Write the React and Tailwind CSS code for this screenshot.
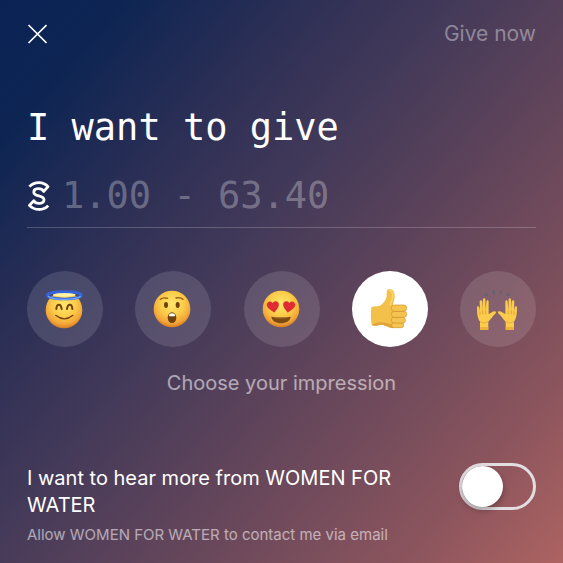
import { useState } from "react";

const CloseIcon = () => (
    <svg
        className="size-5"
        viewBox="0 0 20 20"
        fill="none"
        stroke="currentColor"
        strokeWidth="1.6"
        aria-hidden="true"
    >
        <path d="M1.5 1 19.5 19M19.5 1 1.5 19" />
    </svg>
);

const CoinIcon = () => (
    <svg
        className="h-[30px] w-[23px] shrink-0"
        viewBox="-1 0 23 30"
        fill="none"
        stroke="currentColor"
        strokeWidth="2.8"
        strokeLinejoin="round"
        aria-hidden="true"
    >
        <path d="M1.4 5.6C6.5 0.2 15.5 0.2 20 5.6L15.8 10.4C13.4 6.6 5.8 6.8 5.8 11.2C5.8 16.2 16 13.6 16 18.8C16 23.2 8 23.6 5.8 19.8L1.4 24.4C6.5 29.8 15.5 29.8 20.2 24.6" />
    </svg>
);

const Face = ({ cy = 60 }) => (
    <>
        <defs>
            <radialGradient id="face" cx="50%" cy="36%" r="66%">
                <stop offset="0" stopColor="#ffe76c" />
                <stop offset="0.5" stopColor="#fbcb48" />
                <stop offset="0.8" stopColor="#f2a538" />
                <stop offset="1" stopColor="#cf7420" />
            </radialGradient>
        </defs>
        <circle cx="57" cy={cy} r="55" fill="url(#face)" />
    </>
);

const Innocent = () => (
    <>
        <Face cy={63} />
        <ellipse cx="58" cy="17" rx="34" ry="6" fill="#fff3a8" />
        <ellipse cx="58" cy="19" rx="51" ry="11" fill="none" stroke="#3565dc" strokeWidth="8" />
        <path d="M9 22C22 34 94 34 107 22" fill="none" stroke="#71a5fa" strokeWidth="4" />
        <g fill="none" stroke="#70410f" strokeWidth="6" strokeLinecap="round">
            <path d="M34 60C35 43 48 43 50 60M66 60C68 43 81 43 82 60" />
            <path d="M32 79Q58 100 84 79" strokeWidth="4" />
        </g>
    </>
);

const Astonished = () => (
    <>
        <Face />
        <g fill="none" stroke="#91581a" strokeWidth="4" strokeLinecap="round">
            <path d="M22 31Q31 24 44 28M69 27Q81 23 90 31" />
        </g>
        <g fill="#70410f">
            <ellipse cx="39" cy="48" rx="6" ry="9" />
            <ellipse cx="74" cy="48" rx="6" ry="9" />
            <ellipse cx="57" cy="86" rx="13" ry="16" />
        </g>
        <path d="M48 77Q57 69 66 77L66 82H48Z" fill="#fff" />
    </>
);

const HeartEyes = () => (
    <>
        <Face />
        <g fill="#e02b35" stroke="#bd1e29" strokeWidth="1">
            <path d="M37 70C26 62 15 57 15 47C15 37 28 35 32 43C36 34 51 36 50 47C50 56 42 62 37 70Z" />
            <path d="M77 70C72 62 64 56 64 47C63 36 78 34 82 43C86 35 99 37 99 47C99 57 88 62 77 70Z" />
        </g>
        <path d="M28 83Q57 88 86 83C84 109 30 109 28 83Z" fill="#7c4b14" />
        <path d="M29 83Q57 88 85 83Q57 94 29 83Z" fill="#a46f25" />
    </>
);

const ThumbsUp = () => (
    <>
        <path
            d="M5 108C2 92 2 70 4 55C12 50 22 53 30 50C40 44 48 34 50 22C49 10 50 2 56 0C68-2 75 8 74 22C74 32 70 42 68 51L90 68L68 118C56 116 44 107 34 107C24 108 15 113 5 108Z"
            fill="#f3c04a"
        />
        <path d="M5 108C15 113 24 108 34 107C44 107 56 116 68 118L72 108C50 104 32 92 5 108Z" fill="#e2a338" />
        <g fill="#f5c44e" stroke="#cf922c" strokeWidth="2">
            <rect x="65" y="101" width="36" height="15" rx="7" />
            <rect x="64" y="85" width="42" height="17" rx="8" />
            <rect x="64" y="67" width="46" height="18" rx="9" />
            <rect x="64" y="48" width="46" height="19" rx="9" />
        </g>
        <path d="M56 4Q66 2 69 18Q67 36 60 48" fill="none" stroke="#fad56a" strokeWidth="5" />
    </>
);

const Hand = () => (
    <>
        <path
            d="M6 122V98C-1 88-3 76-3 56C-3 50 3 50 4 56L6 67L5 38C5 32 12 32 13 38L14 63L15 32C15 26 22 26 22 32L23 64L25 38C25 32 32 32 32 38V75C38 74 42 67 51 67C56 68 55 72 50 76C42 84 38 92 31 98V122Z"
            fill="#fbcb4c"
        />
        <path d="M6 67V78M14 63V76M23 64V76" stroke="#d99628" strokeWidth="2" />
        <path d="M6 114H31V122H6Z" fill="#efb13c" />
        <path d="M6 98Q18 106 31 98" fill="none" stroke="#dfa033" strokeWidth="2" />
    </>
);

const RaisedHands = () => (
    <>
        <g fill="#65616e">
            <path d="M16 21L27 9L31 21Z" />
            <path d="M42 6L51 4L51 19L46 15Z" />
            <path d="M65 4L74 7L70 15L65 18Z" />
            <path d="M89 9L99 21L84 20Z" />
        </g>
        <Hand />
        <g transform="matrix(-1 0 0 1 114 0)">
            <Hand />
        </g>
    </>
);

const impressions = [
    { id: "innocent", label: "Blessed", Emoji: Innocent },
    { id: "astonished", label: "Astonished", Emoji: Astonished },
    { id: "heart-eyes", label: "Love it", Emoji: HeartEyes },
    { id: "thumbs-up", label: "Thumbs up", Emoji: ThumbsUp },
    { id: "raised-hands", label: "Raised hands", Emoji: RaisedHands },
];

const App = () => {
    const [amount, setAmount] = useState("");
    const [impression, setImpression] = useState("thumbs-up");
    const [contact, setContact] = useState(false);

    return (
        <form
            onSubmit={(e) => e.preventDefault()}
            className="min-h-screen w-full bg-[linear-gradient(131deg,#0a2355_0%,#0e2553_12%,#2f3056_30%,#443a59_44%,#6a485b_66%,#8a545d_84%,#ad6361_100%)] px-[27px] pt-4 pb-3 font-['Inter',sans-serif] text-white"
        >
            {/* Header */}
            <header className="flex h-9 items-center justify-between">
                <button type="button" aria-label="Close">
                    <CloseIcon />
                </button>
                <button type="submit" className="text-[21px] text-white/40">
                    Give now
                </button>
            </header>

            {/* Amount */}
            <div className="mt-12 font-['DejaVu_Sans_Mono',monospace] text-[37px]">
                <label htmlFor="amount" className="block leading-[56px]">
                    I want to give
                </label>
                <div className="mt-2 flex h-16 items-center gap-3 border-b border-white/20">
                    <CoinIcon />
                    <input
                        id="amount"
                        type="text"
                        inputMode="decimal"
                        placeholder="1.00 - 63.40"
                        value={amount}
                        onChange={(e) => setAmount(e.target.value)}
                        className="w-full min-w-0 bg-transparent outline-none placeholder:text-white/30"
                    />
                </div>
            </div>

            {/* Impression */}
            <fieldset className="mt-[43px]">
                <div className="flex justify-between">
                    {impressions.map(({ id, label, Emoji }) => (
                        <label
                            key={id}
                            className="flex size-[76px] cursor-pointer items-center justify-center rounded-full bg-white/12 has-checked:bg-white"
                        >
                            <input
                                type="radio"
                                name="impression"
                                value={id}
                                aria-label={label}
                                checked={impression === id}
                                onChange={() => setImpression(id)}
                                className="sr-only"
                            />
                            <svg
                                className="size-10 overflow-visible"
                                viewBox="0 0 120 120"
                                aria-hidden="true"
                            >
                                <Emoji />
                            </svg>
                        </label>
                    ))}
                </div>
                <p className="mt-5 text-center text-[20px] leading-8 text-white/55">
                    Choose your impression
                </p>
            </fieldset>

            {/* Contact consent */}
            <div className="mt-16 flex items-start justify-between">
                <div className="w-[390px] pt-0.5">
                    <label htmlFor="contact" className="block text-[20px] leading-[27px]">
                        I want to hear more from WOMEN FOR WATER
                    </label>
                    <p className="mt-1 text-[15px] leading-6 text-white/55">
                        Allow WOMEN FOR WATER to contact me via email
                    </p>
                </div>
                <input
                    id="contact"
                    type="checkbox"
                    role="switch"
                    checked={contact}
                    onChange={(e) => setContact(e.target.checked)}
                    className="flex h-[47px] w-[77px] shrink-0 cursor-pointer appearance-none rounded-full border-3 border-[#e2dde0] before:size-[41px] before:rounded-full before:bg-white before:shadow-[0_3px_6px_rgba(0,0,0,0.3)] before:content-[''] checked:justify-end"
                />
            </div>
        </form>
    );
};

export default App;
